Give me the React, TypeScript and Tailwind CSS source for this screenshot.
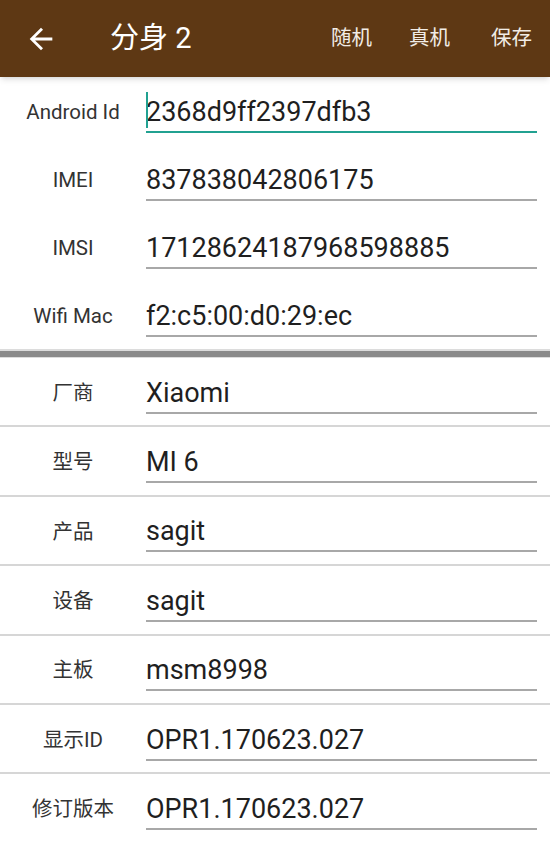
import React from 'react';

interface Field {
  label: string;
  value: string;
}

const deviceIds: Field[] = [
  { label: 'Android Id', value: '2368d9ff2397dfb3' },
  { label: 'IMEI', value: '837838042806175' },
  { label: 'IMSI', value: '17128624187968598885' },
  { label: 'Wifi Mac', value: 'f2:c5:00:d0:29:ec' },
];

const buildProps: Field[] = [
  { label: '厂商', value: 'Xiaomi' },
  { label: '型号', value: 'MI 6' },
  { label: '产品', value: 'sagit' },
  { label: '设备', value: 'sagit' },
  { label: '主板', value: 'msm8998' },
  { label: '显示ID', value: 'OPR1.170623.027' },
  { label: '修订版本', value: 'OPR1.170623.027' },
];

const font = { fontFamily: 'Roboto, "Noto Sans CJK SC", sans-serif' };

const BackArrow = () => (
  <svg width="34" height="34" viewBox="0 0 24 24" fill="#ffffff">
    <path d="M20 11H7.83l5.59-5.59L12 4l-8 8 8 8 1.41-1.41L7.83 13H20v-2z" />
  </svg>
);

const FieldRow = ({ field, focused, divided }: { field: Field; focused?: boolean; divided?: boolean }) => (
  <div
    className={`flex items-center ${divided ? 'h-[69.4px] border-b-2 border-[#d6d6d6]' : 'h-[68px]'}`}
  >
    <div className="w-[146px] pt-[3px] text-center text-[20.5px] text-[#333333]">{field.label}</div>
    <div
      className={`relative flex-1 mr-[13px] h-[44px] flex items-end pb-[3px] border-b-2 ${
        focused ? 'border-[#21a191]' : 'border-[#a8a8a8]'
      }`}
    >
      {focused && <span className="absolute left-0 top-[3px] w-[2px] h-[36px] bg-[#21a191]" />}
      <span className="text-[27px] leading-[32px] text-[#1f1f1f]">{field.value}</span>
    </div>
  </div>
);

export default function App() {
  return (
    <div className="w-[550px] h-[841px] overflow-hidden bg-white" style={font}>
      <header className="relative z-10 h-[77px] bg-[#5e3814] flex items-center pl-[24px] pr-[18px] shadow-md">
        <BackArrow />
        <h1 className="ml-[52px] text-[29px] font-normal text-white">分身&nbsp;2</h1>
        <div className="ml-auto flex items-center text-[20.5px] text-[#f1ece6]">
          <span className="mr-[37px]">随机</span>
          <span className="mr-[41px]">真机</span>
          <span>保存</span>
        </div>
      </header>

      <section>
        {deviceIds.map((f, i) => (
          <FieldRow key={f.label} field={f} focused={i === 0} />
        ))}
      </section>

      <div className="h-[9px] bg-[#8a8a8a] border-t-2 border-b border-[#dcdcdc]" />

      <section>
        {buildProps.map((f) => (
          <FieldRow key={f.label} field={f} divided />
        ))}
      </section>
    </div>
  );
}
